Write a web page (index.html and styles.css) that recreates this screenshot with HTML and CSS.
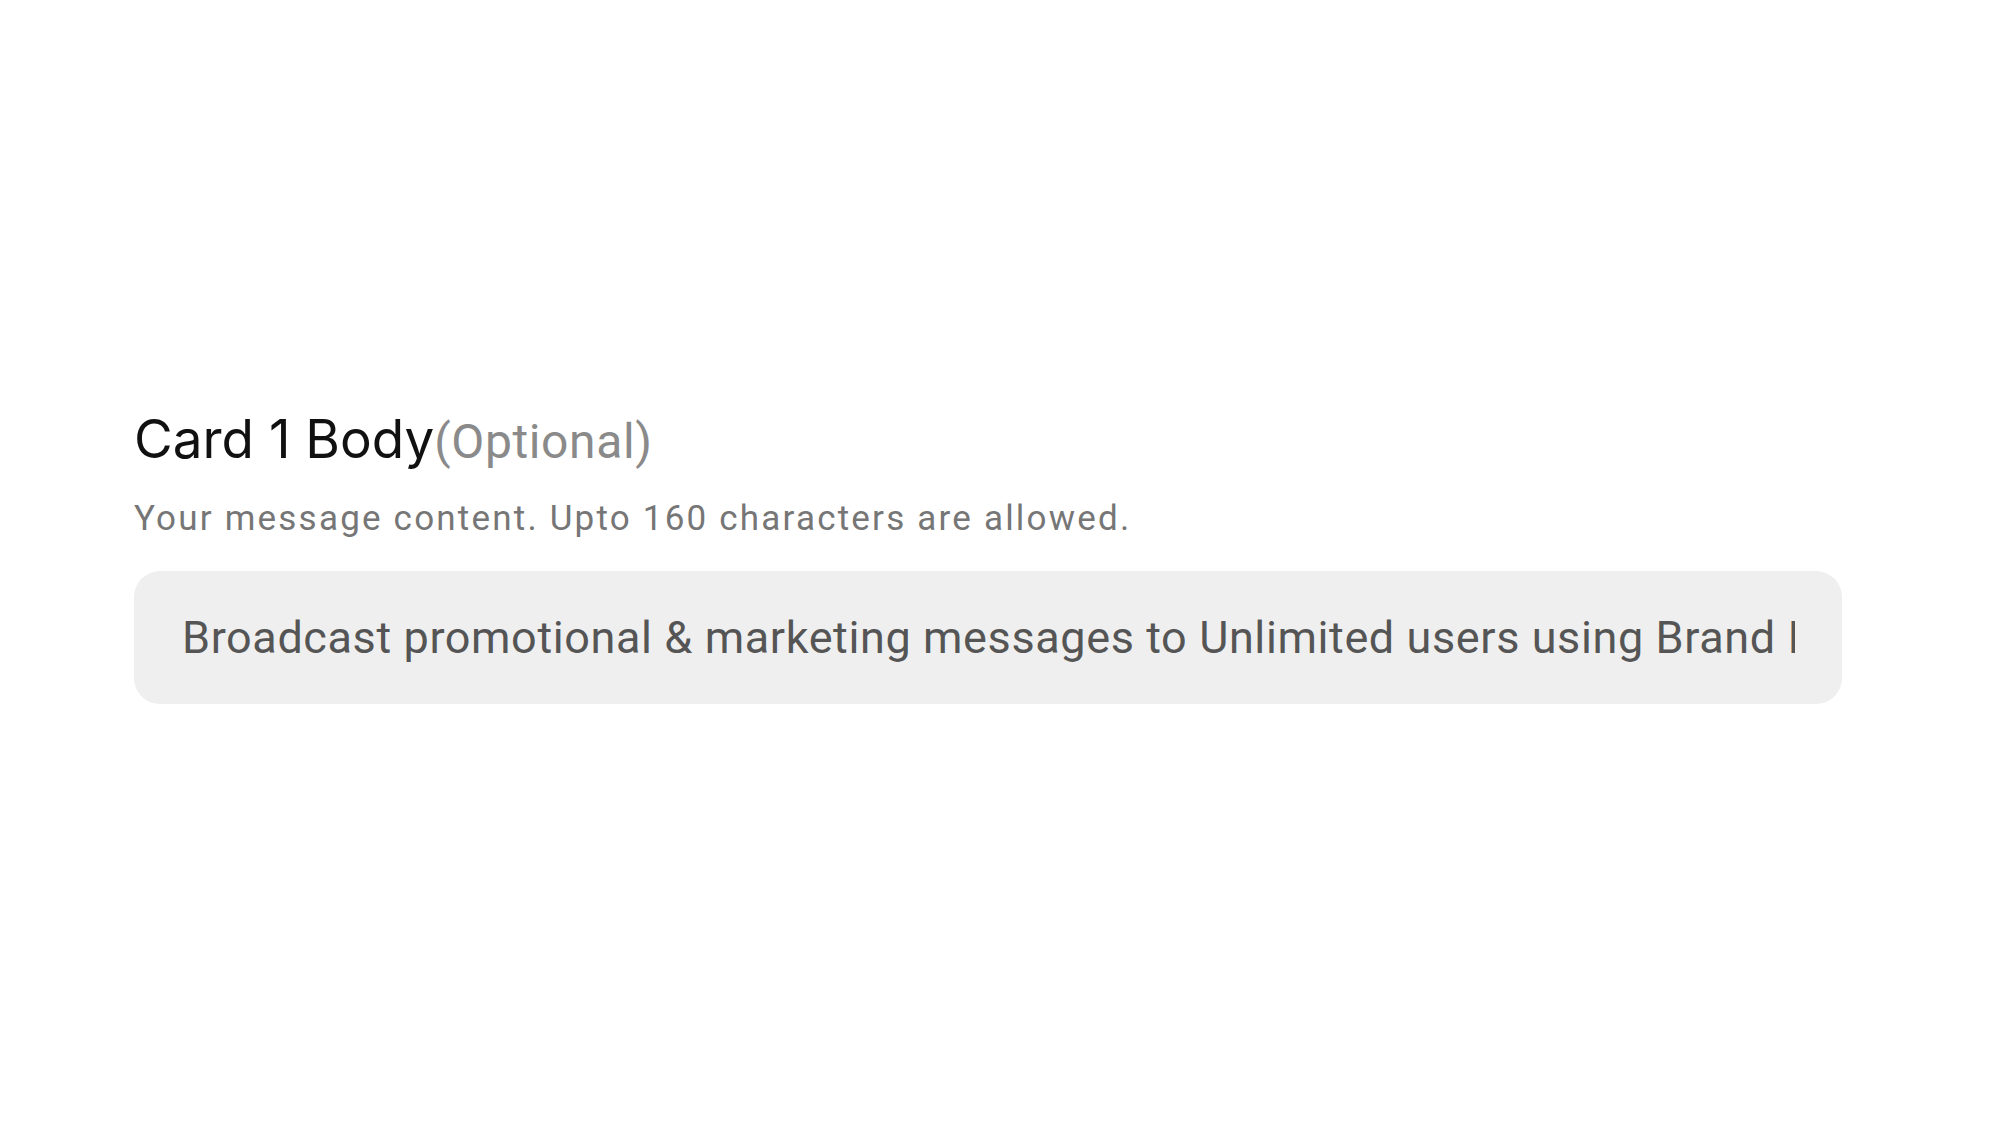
FILE: index.html
```html
<!DOCTYPE html>
<html lang="en">
<head>
<meta charset="utf-8">
<title>Card 1 Body</title>
<link rel="stylesheet" href="styles.css">
</head>
<body>
<main class="page">
  <section class="field">
    <h2 class="field-title">Card 1 Body<span class="field-optional">(Optional)</span></h2>
    <p class="field-hint">Your message content. Upto 160 characters are allowed.</p>
    <input class="field-input" type="text" value="Broadcast promotional &amp; marketing messages to Unlimited users using Brand Identity and Logo" readonly>
  </section>
</main>
</body>
</html>
```

FILE: styles.css
```css
html, body {
  margin: 0;
  padding: 0;
  background: #ffffff;
}

.page {
  padding: 407px 158px 0 134px;
}

.field {
  display: flex;
  flex-direction: column;
  width: 1708px;
}

.field-title {
  margin: 0;
  font-family: Inter, "Liberation Sans", sans-serif;
  font-weight: 400;
  font-size: 53px;
  line-height: 64px;
  color: #111111;
}

.field-optional {
  font-family: Roboto, "Liberation Sans", sans-serif;
  font-size: 48px;
  letter-spacing: 0.6px;
  color: #8a8a8a;
}

.field-hint {
  margin: 25px 0 0;
  font-family: Roboto, "Liberation Sans", sans-serif;
  font-size: 35px;
  line-height: 40px;
  letter-spacing: 2.2px;
  color: #767676;
}

.field-input {
  margin-top: 32px;
  box-sizing: border-box;
  width: 100%;
  height: 133px;
  padding: 0 47px 0 48px;
  border: none;
  outline: none;
  border-radius: 26px;
  background: #efefef;
  font-family: Roboto, "Liberation Sans", sans-serif;
  font-size: 45px;
  letter-spacing: 0.6px;
  color: #555555;
}
```
